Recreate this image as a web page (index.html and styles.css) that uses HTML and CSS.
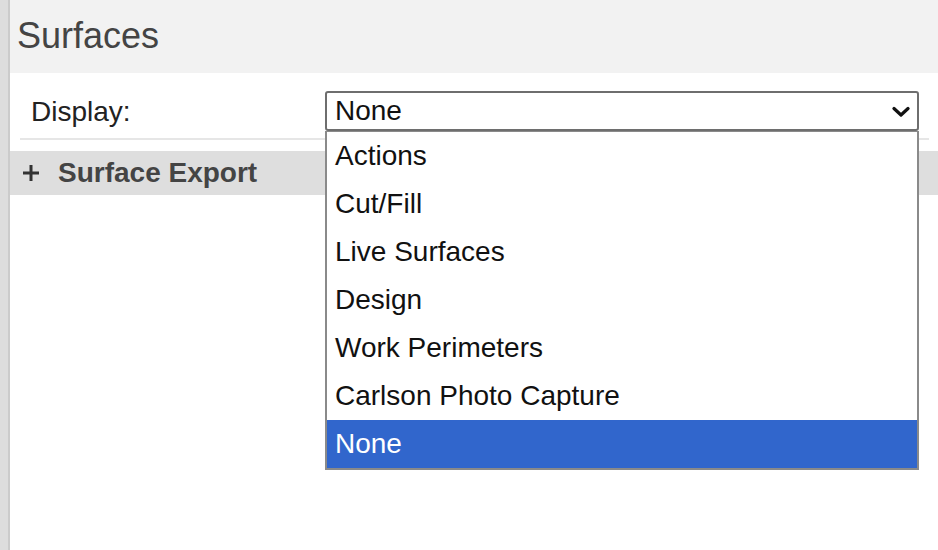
FILE: index.html
```html
<!DOCTYPE html>
<html>
<head>
<meta charset="utf-8">
<link rel="stylesheet" href="styles.css">
</head>
<body>
<div class="page">
  <div class="rail"></div>
  <div class="main">
    <div class="header">Surfaces</div>
    <div class="display-row">
      <div class="label">Display:</div>
      <div class="select-wrap">
        <div class="select">
          <span>None</span>
          <svg class="chev" width="18" height="12" viewBox="0 0 18 12"><path d="M2 2.5 L9 9 L16 2.5" fill="none" stroke="#111" stroke-width="3.2" stroke-linecap="round" stroke-linejoin="round"/></svg>
        </div>
        <ul class="options">
          <li>Actions</li>
          <li>Cut/Fill</li>
          <li>Live Surfaces</li>
          <li>Design</li>
          <li>Work Perimeters</li>
          <li>Carlson Photo Capture</li>
          <li class="selected">None</li>
        </ul>
      </div>
    </div>
    <div class="section">
      <svg class="plus" width="18" height="18" viewBox="0 0 18 18"><path d="M9 1 V17 M1 9 H17" stroke="#333" stroke-width="3"/></svg>
      <span class="section-title">Surface Export</span>
    </div>
  </div>
</div>
</body>
</html>
```
FILE: styles.css
```css
html, body {
  margin: 0;
  padding: 0;
  background: #fff;
}
body {
  font-family: "Liberation Sans", Arial, sans-serif;
  width: 938px;
  height: 550px;
  overflow: hidden;
}
.page {
  display: flex;
  height: 550px;
}
.rail {
  width: 8px;
  background: #dddddd;
  border-right: 2px solid #cbcbcb;
  flex: none;
}
.main {
  flex: 1;
  display: flex;
  flex-direction: column;
}
.header {
  height: 73px;
  background: #f2f2f2;
  color: #444;
  font-size: 36px;
  line-height: 71px;
  padding-left: 7px;
  box-sizing: border-box;
}
.display-row {
  display: flex;
  align-items: center;
  height: 67px;
  padding-top: 10px;
  box-sizing: border-box;
  margin: 0 9px 0 10px;
  border-bottom: 2px solid #e6e6e6;
}
.label {
  width: 305px;
  box-sizing: border-box;
  padding-left: 11px;
  padding-top: 2px;
  font-size: 28px;
  color: #222;
  flex: none;
}
.select-wrap {
  position: relative;
  width: 594px;
  flex: none;
}
.select {
  height: 40px;
  box-sizing: border-box;
  border: 2px solid #6e6e6e;
  border-radius: 3px;
  display: flex;
  align-items: center;
  justify-content: space-between;
  padding: 0 7px 0 8px;
  font-size: 28px;
  color: #111;
}
.chev {
  display: block;
  margin-top: 2px;
}
.options {
  position: absolute;
  left: 0;
  top: 40px;
  width: 594px;
  box-sizing: border-box;
  margin: 0;
  padding: 0;
  list-style: none;
  background: #fff;
  border: 2px solid #8a8a8a;
  border-top: 1px solid #8a8a8a;
  z-index: 5;
}
.options li {
  height: 48px;
  line-height: 48px;
  padding-left: 8px;
  font-size: 28px;
  color: #111;
}
.options li.selected {
  background: #3166cc;
  color: #fff;
}
.section {
  margin-top: 11px;
  height: 44px;
  background: #dedede;
  display: flex;
  align-items: center;
  color: #444;
  font-weight: bold;
  font-size: 28px;
}
.plus {
  display: block;
  margin-left: 12px;
  margin-right: 18px;
  flex: none;
}
```
